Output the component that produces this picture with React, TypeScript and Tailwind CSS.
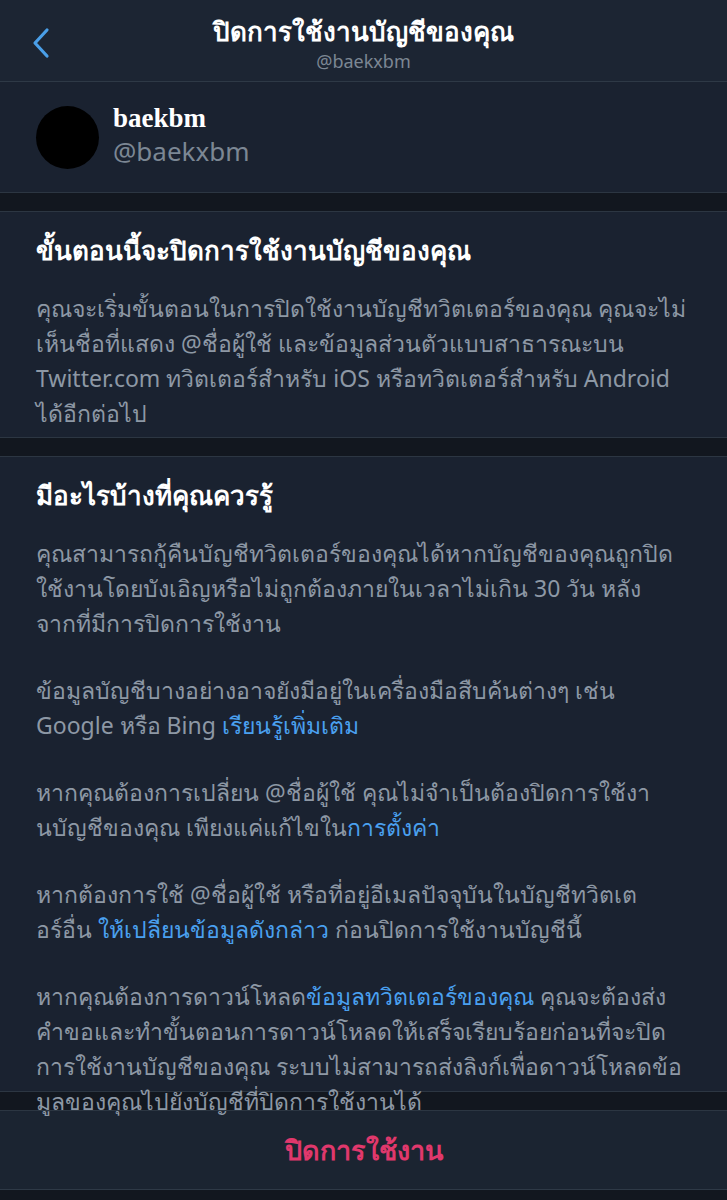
import React from "react";

// one paragraph = array of lines, each line = array of [text, isLink]
type Seg = [string, boolean?];

const intro: Seg[][] = [
  [["คุณจะเริ่มขั้นตอนในการปิดใช้งานบัญชีทวิตเตอร์ของคุณ คุณจะไม่"]],
  [["เห็นชื่อที่แสดง @ชื่อผู้ใช้ และข้อมูลส่วนตัวแบบสาธารณะบน"]],
  [["Twitter.com ทวิตเตอร์สำหรับ iOS หรือทวิตเตอร์สำหรับ Android"]],
  [["ได้อีกต่อไป"]],
];

const notes: Seg[][][] = [
  [
    [["คุณสามารถกู้คืนบัญชีทวิตเตอร์ของคุณได้หากบัญชีของคุณถูกปิด"]],
    [["ใช้งานโดยบังเอิญหรือไม่ถูกต้องภายในเวลาไม่เกิน 30 วัน หลัง"]],
    [["จากที่มีการปิดการใช้งาน"]],
  ],
  [
    [["ข้อมูลบัญชีบางอย่างอาจยังมีอยู่ในเครื่องมือสืบค้นต่างๆ เช่น"]],
    [["Google หรือ Bing "], ["เรียนรู้เพิ่มเติม", true]],
  ],
  [
    [["หากคุณต้องการเปลี่ยน @ชื่อผู้ใช้ คุณไม่จำเป็นต้องปิดการใช้งา"]],
    [["นบัญชีของคุณ เพียงแค่แก้ไขใน"], ["การตั้งค่า", true]],
  ],
  [
    [["หากต้องการใช้ @ชื่อผู้ใช้ หรือที่อยู่อีเมลปัจจุบันในบัญชีทวิตเต"]],
    [["อร์อื่น "], ["ให้เปลี่ยนข้อมูลดังกล่าว", true], [" ก่อนปิดการใช้งานบัญชีนี้"]],
  ],
  [
    [["หากคุณต้องการดาวน์โหลด"], ["ข้อมูลทวิตเตอร์ของคุณ", true], [" คุณจะต้องส่ง"]],
    [["คำขอและทำขั้นตอนการดาวน์โหลดให้เสร็จเรียบร้อยก่อนที่จะปิด"]],
    [["การใช้งานบัญชีของคุณ ระบบไม่สามารถส่งลิงก์เพื่อดาวน์โหลดข้อ"]],
    [["มูลของคุณไปยังบัญชีที่ปิดการใช้งานได้"]],
  ],
];

function Lines({ lines }: { lines: Seg[][] }) {
  return (
    <div className="text-[23px] leading-[35px] text-[#8d98a5]">
      {lines.map((line, i) => (
        <div key={i} className="whitespace-pre">
          {line.map(([t, link], j) => (
            <span key={j} className={link ? "text-[#4aa0ef]" : undefined}>
              {t}
            </span>
          ))}
        </div>
      ))}
    </div>
  );
}

function Gap() {
  return <div className="h-[20px] bg-[#12171f] border-y border-[#2c3642]" />;
}

export default function App() {
  return (
    <div className="w-[727px] h-[1200px] overflow-hidden bg-[#12171f] font-['Noto_Sans','Liberation_Sans',sans-serif] flex flex-col">
      {/* header */}
      <div className="h-[82px] shrink-0 bg-[#1c2533] border-b border-[#2e3946] relative flex flex-col items-center pt-[16px]">
        <svg className="absolute left-[30px] top-[27px]" width="22" height="32" viewBox="0 0 22 32" fill="none">
          <path d="M17 3 L5 16 L17 29" stroke="#4a9fe8" strokeWidth="3.2" strokeLinecap="round" strokeLinejoin="round" />
        </svg>
        <div className="text-[26px] leading-[30px] font-bold text-white">ปิดการใช้งานบัญชีของคุณ</div>
        <div className="mt-[4px] text-[18px] leading-[22px] text-[#7c8794]">@baekxbm</div>
      </div>

      {/* profile */}
      <div className="h-[110px] shrink-0 bg-[#1a2230] flex items-center gap-[14px] pl-[36px]">
        <div className="w-[63px] h-[63px] rounded-full bg-black" />
        <div className="flex flex-col -mt-[4px]">
          <div className="font-['Liberation_Serif',serif] font-bold text-[27px] leading-[32px] text-white">baekbm</div>
          <div className="text-[26px] leading-[34px] text-[#7c8794]">@baekxbm</div>
        </div>
      </div>

      <Gap />

      {/* section 1 */}
      <div className="h-[225px] shrink-0 bg-[#1a2230] px-[36px] pt-[18px]">
        <div className="text-[26px] leading-[40px] font-bold text-white">ขั้นตอนนี้จะปิดการใช้งานบัญชีของคุณ</div>
        <div className="mt-[21px]">
          <Lines lines={intro} />
        </div>
      </div>

      <Gap />

      {/* section 2 */}
      <div className="h-[634px] shrink-0 bg-[#1a2230] px-[36px] pt-[18px] relative z-10">
        <div className="text-[26px] leading-[40px] font-bold text-white">มีอะไรบ้างที่คุณควรรู้</div>
        <div className="mt-[21px] flex flex-col gap-[32px]">
          {notes.map((p, i) => (
            <Lines key={i} lines={p} />
          ))}
        </div>
      </div>

      <Gap />

      {/* footer */}
      <div className="h-[79px] shrink-0 bg-[#1b2431] border-b border-[#2e3946] flex items-center justify-center">
        <span className="text-[27px] font-bold text-[#e0386c]">ปิดการใช้งาน</span>
      </div>
    </div>
  );
}
